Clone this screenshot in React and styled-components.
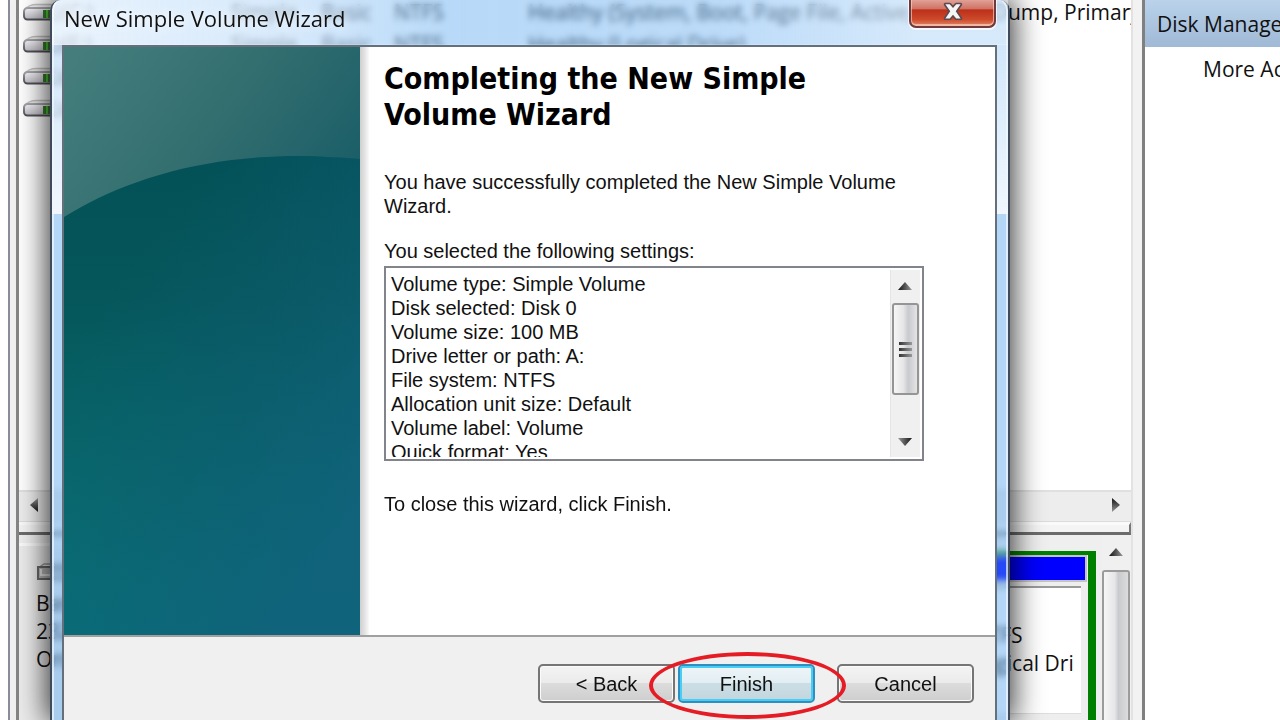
import React from "react";
import styled, { createGlobalStyle } from "styled-components";

const ui = `"Open Sans", "Noto Sans", sans-serif`;
const dialogFont = `"Liberation Sans", sans-serif`;

const Global = createGlobalStyle`
  * { box-sizing: border-box; }
  body { margin: 0; background: #fff; color: #111; font-family: ${ui}; }
`;

const Desktop = styled.div`
  position: relative;
  display: grid;
  grid-template-columns: 19px minmax(0, 1fr) 14px 135px;
  min-height: 100vh;
  overflow: hidden;
  font-size: 21px;
`;

const LeftEdge = styled.div`
  margin-left: 8px;
  background: #f0f0f0;
  border-left: 2px solid #8a8d98;
  border-right: 3px solid #858585;
`;

const Splitter = styled.div`
  background: #f2f2f2;
  border-left: 2px solid #e2e2e2;
  border-right: 3px solid #808080;
`;

const Main = styled.main`
  display: flex;
  flex-direction: column;
  min-width: 0;
`;

const VolumePane = styled.section`
  flex: 1 0 auto;
  overflow: hidden;
`;

const VolumeTable = styled.table`
  width: 100%;
  margin-top: -4px;
  table-layout: fixed;
  border-collapse: collapse;
`;

const Column = styled.col`
  width: ${(p) => (p.$w ? `${p.$w}px` : "auto")};
`;

const Cell = styled.td`
  height: 32px;
  padding: 0;
  line-height: 28px;
  white-space: nowrap;
  overflow: hidden;
  vertical-align: middle;
`;

const DriveCell = styled(Cell)`
  padding-left: 3px;
  line-height: 0;
`;

const HScroll = styled.div`
  display: flex;
  flex: none;
  align-items: center;
  justify-content: space-between;
  height: 32px;
  padding: 0 11px 4px;
  background: #ededed;
  border-top: 2px solid #e0e0e0;
  border-bottom: 1px solid #dcdcdc;
`;

const PaneRule = styled.div`
  flex: none;
  height: 13px;
  background: #f4f4f4;
  border-right: 2px solid #777;
  border-bottom: 3px solid #6c6c6c;
  border-top: 3px solid #fafafa;
`;

const DiskPane = styled.section`
  display: flex;
  flex: none;
  height: 185px;
  background: #efefef;
  overflow: hidden;
`;

const DiskLabel = styled.div`
  flex: none;
  width: 200px;
  padding: 25px 0 0 17px;
  margin-top: 8px;
  background: #ececec;
  border-top: 3px solid #fafafa;
  line-height: 28px;
`;

const DiskLine = styled.div`
  line-height: 28px;
  white-space: nowrap;
`;

const DiskIconBox = styled.div`
  height: 24px;
  margin-top: -8px;
  margin-bottom: 2px;
  line-height: 0;
`;

const Partition = styled.div`
  flex: 1;
  min-width: 0;
  margin-top: 16px;
  margin-right: 6px;
  border: 8px solid #008000;
  border-top-width: 4px;
  border-bottom: 0;
  background: #eee;
`;

const PartitionBar = styled.div`
  height: 27px;
  margin-right: 1px;
  background: #0000ff;
  border: 2px solid #c4c4c4;
  border-left: 0;
`;

const PartitionBody = styled.div`
  display: flex;
  justify-content: flex-end;
  height: 128px;
  margin: 4px 7px 0 0;
  padding: 33px 6px 0 0;
  background: #fff;
  border-top: 2px solid #9a9a9a;
  border-bottom: 1px solid #ddd;
`;

const PartitionText = styled.div`
  width: 190px;
  overflow: hidden;
  white-space: nowrap;
  line-height: 28px;
`;

const VScroll = styled.div`
  display: flex;
  flex: none;
  flex-direction: column;
  align-items: center;
  width: 29px;
  padding: 13px 1px 0 0;
  background: #f0f0f0;
`;

const VThumb = styled.div`
  width: 28px;
  flex: 1;
  margin-top: 14px;
  border: 2px solid #9b9b9b;
  border-bottom: 0;
  border-radius: 3px 3px 0 0;
  background: linear-gradient(90deg, #f6f6f6, #e6e6e8 45%, #c9cacd 60%, #dcdcde);
`;

const Actions = styled.aside`
  overflow: hidden;
  background: #fff;
  white-space: nowrap;
`;

const ActionsHeader = styled.h2`
  margin: 0;
  padding-left: 12px;
  height: 47px;
  background: linear-gradient(#bad2ea, #9fb9d6);
  font-size: 21px;
  font-weight: 400;
  line-height: 48px;
`;

const ActionLink = styled.a`
  display: block;
  padding-left: 58px;
  color: inherit;
  line-height: 44px;
  text-decoration: none;
`;

const Dialog = styled.section`
  position: absolute;
  top: 0;
  bottom: 0;
  left: 50px;
  right: 270px;
  display: flex;
  flex-direction: column;
  padding: 0 11px 0 10px;
  border: 2px solid #3f4b5a;
  border-top: 0;
  border-bottom: 0;
  border-radius: 10px 10px 0 0;
  box-shadow: inset 2px 0 0 rgba(240, 248, 255, 0.7),
    inset -2px 0 0 rgba(240, 248, 255, 0.7), 0 0 30px 3px rgba(0, 0, 0, 0.8);
  background:
    linear-gradient(rgba(255, 255, 255, 0), rgba(255, 255, 255, 0) 44px, rgba(255, 255, 255, 0.4) 45px, rgba(255, 255, 255, 0.8)) 0 0 / 100% 214px no-repeat,
    rgba(84, 164, 240, 0.44);
  backdrop-filter: blur(3px);
`;

const TitleBar = styled.header`
  display: flex;
  flex: none;
  align-items: flex-start;
  justify-content: space-between;
  height: 45px;
  margin: 0 -11px 0 -10px;
  padding: 0 12px;
  border-radius: 10px 0 0 0;
  background: linear-gradient(90deg, rgba(255, 255, 255, 0.7), rgba(255, 255, 255, 0.45) 25%, rgba(255, 255, 255, 0.05) 42%, rgba(255, 255, 255, 0.1) 70%, rgba(255, 255, 255, 0.45) 90%);
`;

const Title = styled.h1`
  margin: 0;
  font-size: 22px;
  font-weight: 400;
  line-height: 36px;
  text-shadow: 0 0 8px #fff;
`;

const CloseButton = styled.button`
  width: 87px;
  height: 28px;
  padding: 0;
  border: 2px solid #6e3a3c;
  border-top: 0;
  border-radius: 0 0 7px 7px;
  box-shadow: inset 0 -1px 0 1px rgba(255, 220, 210, 0.6), 0 1px 0 1px rgba(255, 255, 255, 0.7);
  background: linear-gradient(#e0a196, #cf7262 34%, #bd2f18 38%, #cd4a2c 75%, #e08a68);
  line-height: 0;
`;

const Client = styled.div`
  display: flex;
  flex: 1;
  flex-direction: column;
  border: 2px solid #65707d;
  border-bottom: 0;
  background: #fff;
`;

const Page = styled.div`
  display: flex;
  flex: none;
  height: 590px;
  border-bottom: 2px solid #a0a0a0;
`;

const Watermark = styled.svg`
  display: block;
  flex: none;
  width: 296px;
  height: 588px;
`;

const Content = styled.div`
  flex: 1;
  padding: 14px 71px 0 24px;
  background: linear-gradient(90deg, #cfcfcf, #e4e4e4 5px, #fff 10px);
  font-family: ${dialogFont};
  font-size: 20px;
  line-height: 24px;
`;

const Heading = styled.h2`
  margin: 0 0 37px;
  color: #000;
  font-family: "DejaVu Sans Condensed", "DejaVu Sans", sans-serif;
  font-size: 30px;
  font-weight: 700;
  line-height: 36px;
`;

const Paragraph = styled.p`
  margin: 0 0 21px;
`;

const SettingsLabel = styled.label`
  display: block;
  margin-bottom: 3px;
`;

const SettingsBox = styled.div`
  display: flex;
  height: 195px;
  margin-bottom: 31px;
  padding: 2px;
  border: 2px solid #82848c;
`;

const Settings = styled.textarea`
  flex: 1;
  min-width: 0;
  padding: 2px 0 0 3px;
  border: 0;
  outline: 0;
  resize: none;
  overflow: hidden;
  background: transparent;
  color: inherit;
  font: inherit;
`;

const SettingsScroll = styled.div`
  display: flex;
  flex-direction: column;
  align-items: center;
  justify-content: space-between;
  width: 30px;
  padding: 12px 1px 11px 0;
  background: #f0f0f0;
  border-left: 1px solid #e4e4e4;
`;

const SettingsThumb = styled.div`
  display: flex;
  flex-direction: column;
  align-items: center;
  justify-content: center;
  gap: 3px;
  width: 27px;
  height: 92px;
  margin-bottom: 30px;
  border: 2px solid #959595;
  border-radius: 3px;
  background: linear-gradient(90deg, #f6f6f6, #e6e6e8 40%, #c9cacd 62%, #e4e4e6);
`;

const Grip = styled.span`
  width: 13px;
  height: 3px;
  background: linear-gradient(90deg, #333, #999);
`;

const Footer = styled.footer`
  display: flex;
  flex: 1;
  align-items: flex-start;
  justify-content: flex-end;
  padding: 27px 21px 17px;
  background: #f0f0f0;
`;

const WizardButton = styled.button`
  width: 137px;
  height: 39px;
  margin-left: ${(p) => (p.$gap ? "22px" : "0")};
  padding: 2px 0 0;
  border: 2px solid ${(p) => (p.$primary ? "#2f8fc0" : "#757575")};
  border-radius: 5px;
  box-shadow: ${(p) =>
    p.$primary ? "inset 0 0 0 2px #48cdf5" : "inset 0 0 0 1px #fbfbfb"};
  background: ${(p) =>
    p.$primary
      ? "linear-gradient(#eef5f8, #e2eef3 48%, #cbdde5 50%, #c3d5dd)"
      : "linear-gradient(#f3f3f3, #ebebeb 48%, #dcdcdc 50%, #cecece)"};
  color: #111;
  font-family: ${dialogFont};
  font-size: 20px;
`;

const Marked = styled.div`
  position: relative;
  margin-left: 3px;
`;

const Ring = styled.span`
  position: absolute;
  z-index: 1;
  inset: -12px -31px -16px -29px;
  border: 4px solid #e51c24;
  border-radius: 50%;
  pointer-events: none;
`;

function Drive() {
  return (
    <svg width="40" height="18" viewBox="0 0 40 18">
      <defs>
        <linearGradient id="drv" x1="0" y1="0" x2="0" y2="1">
          <stop offset="0" stopColor="#f8f8fb" />
          <stop offset="1" stopColor="#bcbcc6" />
        </linearGradient>
        <linearGradient id="drvEdge" x1="0" y1="0" x2="0" y2="1">
          <stop offset="0" stopColor="#a6a6ac" />
          <stop offset="1" stopColor="#505056" />
        </linearGradient>
      </defs>
      <path d="M3 6 C6 3 10 1.500 14 1.500 H28 C32 1.500 36 3 38 6" fill="#f0f0f0" stroke="#c4c4c4" strokeWidth="1.5" />
      <rect x="2" y="5" width="37" height="11.5" rx="3.5" fill="url(#drv)" stroke="url(#drvEdge)" strokeWidth="2" />
      <rect x="21" y="7" width="7" height="8" fill="#3d7a34" />
      <rect x="24" y="7" width="2" height="8" fill="#4cd02e" />
    </svg>
  );
}

function Arrow({ dir }) {
  const turn = { up: 0, right: 90, down: 180, left: 270 }[dir];
  const side = dir === "left" || dir === "right";
  return (
    <svg width={side ? 8 : 14} height={side ? 14 : 8} viewBox={side ? "-4 -7 8 14" : "-7 -4 14 8"}>
      <defs>
        <linearGradient id="arr">
          <stop offset="0" stopColor="#111" />
          <stop offset="1" stopColor="#999" />
        </linearGradient>
      </defs>
      <path d="M-7 4 L0 -4 L7 4 Z" fill="url(#arr)" transform={`rotate(${turn})`} />
    </svg>
  );
}

function DiskIcon() {
  return (
    <svg width="34" height="18" viewBox="0 0 34 18">
      <path d="M2 5 L8 1 H32" fill="none" stroke="#999" strokeWidth="1.5" />
      <path d="M2 4 H33 V16 H2 Z" fill="#b8b8b8" stroke="#6a6a6a" strokeWidth="2" />
      <path d="M5 6 V12 H32" fill="none" stroke="#e6e6e6" strokeWidth="2" />
    </svg>
  );
}

const hill = "M0 170 C58 134 135 109 235 109 C257 109 280 111 296 112 V588 H0 Z";

function WizardArt() {
  return (
    <Watermark viewBox="0 0 296 588" preserveAspectRatio="none" aria-hidden="true">
      <defs>
        <linearGradient id="top" gradientUnits="userSpaceOnUse" x1="20" y1="0" x2="250" y2="170">
          <stop offset="0" stopColor="#447d7c" />
          <stop offset="0.5" stopColor="#346f70" />
          <stop offset="1" stopColor="#1c5f68" />
        </linearGradient>
        <linearGradient id="left" x1="0" y1="0" x2="0" y2="1">
          <stop offset="0" stopColor="#035157" />
          <stop offset="0.3" stopColor="#05575b" />
          <stop offset="0.7" stopColor="#076a6b" />
          <stop offset="1" stopColor="#057b7b" />
        </linearGradient>
        <linearGradient id="blue" gradientUnits="userSpaceOnUse" x1="20" y1="280" x2="290" y2="480">
          <stop offset="0" stopColor="#0f5c74" stopOpacity="0" />
          <stop offset="0.5" stopColor="#0f5c74" stopOpacity="0.5" />
          <stop offset="1" stopColor="#10627b" stopOpacity="0.95" />
        </linearGradient>
      </defs>
      <rect width="296" height="588" fill="url(#top)" />
      <path d={hill} fill="url(#left)" />
      <path d={hill} fill="url(#blue)" />
    </Watermark>
  );
}

const volumes = [
  ["(C:)", "Simple", "Basic", "NTFS", "Healthy (System, Boot, Page File, Active, \u00a0\u00a0Crash Dump, Primary Partition)"],
  ["(E:)", "Simple", "Basic", "NTFS", "Healthy (Logical Drive)"],
  ["(F:)", "Simple", "Basic", "NTFS", "Healthy (Logical Drive)"],
  ["(G:)", "Simple", "Basic", "NTFS", "Healthy (Logical Drive)"],
];

const settings = [
  "Volume type: Simple Volume",
  "Disk selected: Disk 0",
  "Volume size: 100 MB",
  "Drive letter or path: A:",
  "File system: NTFS",
  "Allocation unit size: Default",
  "Volume label: Volume",
  "Quick format: Yes",
].join("\n");

const cross = "M5 3 H9 L12 6.500 L15 3 H19 L14.500 9.500 L19 16 H15 L12 12.500 L9 16 H5 L9.500 9.500 Z";

export default function App() {
  return (
    <>
      <Global />
      <Desktop>
        <LeftEdge />
        <Main>
          <VolumePane>
            <VolumeTable>
              <colgroup>
                <Column $w={43} />
                <Column $w={169} />
                <Column $w={90} />
                <Column $w={73} />
                <Column $w={134} />
                <Column />
              </colgroup>
              <tbody>
                {volumes.map((row) => (
                  <tr key={row[0]}>
                    <DriveCell><Drive /></DriveCell>
                    {row.map((text, i) => (
                      <Cell key={i}>{text}</Cell>
                    ))}
                  </tr>
                ))}
              </tbody>
            </VolumeTable>
          </VolumePane>
          <HScroll>
            <Arrow dir="left" />
            <Arrow dir="right" />
          </HScroll>
          <PaneRule />
          <DiskPane>
            <DiskLabel>
              <DiskIconBox><DiskIcon /></DiskIconBox>
              <DiskLine>Basic</DiskLine>
              <DiskLine>232.88 GB</DiskLine>
              <DiskLine>Online</DiskLine>
            </DiskLabel>
            <Partition>
              <PartitionBar />
              <PartitionBody>
                <PartitionText>
                  <DiskLine>2000 GB NTFS</DiskLine>
                  <DiskLine>Healthy (Logical Dri</DiskLine>
                </PartitionText>
              </PartitionBody>
            </Partition>
            <VScroll>
              <Arrow dir="up" />
              <VThumb />
            </VScroll>
          </DiskPane>
        </Main>
        <Splitter />
        <Actions>
          <ActionsHeader>Disk Management</ActionsHeader>
          <ActionLink href="#more">More Actions</ActionLink>
        </Actions>

        <Dialog role="dialog" aria-labelledby="wizard-title">
          <TitleBar>
            <Title id="wizard-title">New Simple Volume Wizard</Title>
            <CloseButton type="button" aria-label="Close">
              <svg width="28" height="24" viewBox="0 0 24 22">
                <path d={cross} fill="#fff" stroke="#5c4a50" strokeWidth="3" strokeLinejoin="round" />
                <path d={cross} fill="#f6f6f6" />
              </svg>
            </CloseButton>
          </TitleBar>
          <Client>
            <Page>
              <WizardArt />
              <Content>
                <Heading>Completing the New Simple<br />Volume Wizard</Heading>
                <Paragraph>You have successfully completed the New Simple Volume Wizard.</Paragraph>
                <SettingsLabel htmlFor="settings">You selected the following settings:</SettingsLabel>
                <SettingsBox>
                  <Settings id="settings" readOnly value={settings} />
                  <SettingsScroll>
                    <Arrow dir="up" />
                    <SettingsThumb><Grip /><Grip /><Grip /></SettingsThumb>
                    <Arrow dir="down" />
                  </SettingsScroll>
                </SettingsBox>
                <Paragraph>To close this wizard, click Finish.</Paragraph>
              </Content>
            </Page>
            <Footer>
              <WizardButton type="button">&lt; Back</WizardButton>
              <Marked>
                <WizardButton type="button" $primary>Finish</WizardButton>
                <Ring />
              </Marked>
              <WizardButton type="button" $gap>Cancel</WizardButton>
            </Footer>
          </Client>
        </Dialog>
      </Desktop>
    </>
  );
}
